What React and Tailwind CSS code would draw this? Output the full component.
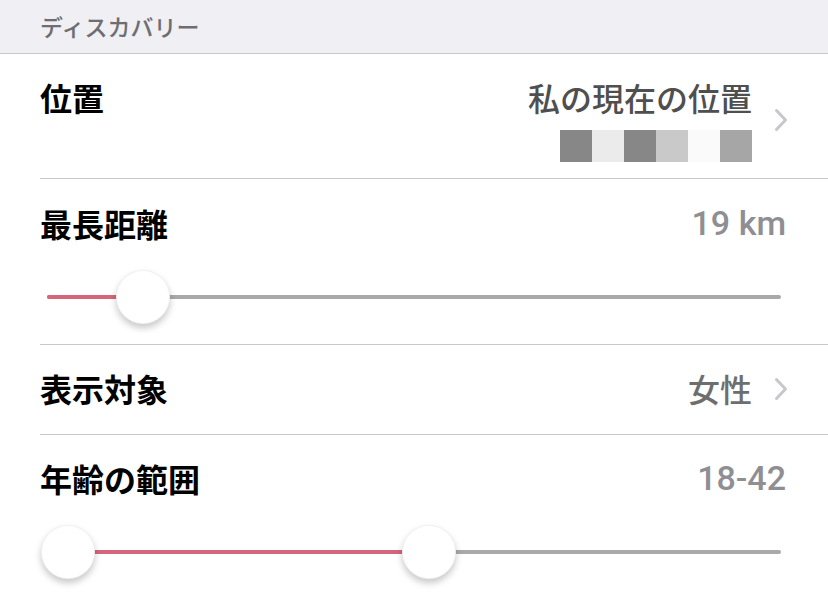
import React from "react";

const jp = { fontFamily: '"Noto Sans CJK JP", "Noto Sans", sans-serif' };
const num = { fontFamily: 'Roboto, "Liberation Sans", Arial, sans-serif' };

function Chevron() {
  return (
    <svg width="14" height="24" viewBox="0 0 14 24" className="shrink-0">
      <polyline points="2.5,2.5 11.5,12 2.5,21.5" fill="none" stroke="#c7c7cc" strokeWidth="3" strokeLinecap="round" strokeLinejoin="round" />
    </svg>
  );
}

function Thumb({ center }) {
  return (
    <div
      className="absolute top-0 w-[54px] h-[54px] rounded-full bg-white border border-black/5 shadow-[0_4px_7px_rgba(0,0,0,0.22)]"
      style={{ left: center - 27 }}
    />
  );
}

function Slider({ from, to, thumbs }) {
  return (
    <div className="relative h-[54px] mx-10">
      <div className="absolute left-[7px] right-[7px] top-[25px] h-[4px] rounded-full bg-[#a9a9ab]" />
      <div
        className="absolute top-[25px] h-[4px] rounded-full bg-[#d5657b]"
        style={{ left: from, width: to - from }}
      />
      {thumbs.map((c, i) => (
        <Thumb key={i} center={c} />
      ))}
    </div>
  );
}

export default function App() {
  const squares = ["#878787", "#ebebeb", "#878787", "#c9c9c9", "#fafafa", "#a6a6a6"];
  return (
    <div className="w-[828px] h-[601px] overflow-hidden bg-white" style={jp}>
      <div className="h-[54px] bg-[#efeff4] border-b border-[#c8c7cc] flex items-center pl-10">
        <span className="text-[23px] font-medium text-[#6d6d72] leading-none">ディスカバリー</span>
      </div>

      {/* 位置 */}
      <div className="ml-10 border-b border-[#c8c7cc] pt-[23px] pb-[16px] flex items-center pr-10">
        <div className="flex-1 self-start text-[32px] font-bold text-black leading-[41px]">位置</div>
        <div className="flex flex-col items-end">
          <div className="text-[32px] font-medium text-[#4f4f4f] leading-[41px]">私の現在の位置</div>
          <div className="flex mt-3">
            {squares.map((c, i) => (
              <div key={i} className="w-8 h-8" style={{ backgroundColor: c }} />
            ))}
          </div>
        </div>
        <div className="ml-[22px]">
          <Chevron />
        </div>
      </div>

      {/* 最長距離 */}
      <div className="border-b border-[#c8c7cc] ml-10">
        <div className="pt-[24px] flex items-center pr-[42px]">
          <div className="flex-1 text-[32px] font-bold text-black leading-[41px]">最長距離</div>
          <div className="text-[34px] font-medium text-[#8e8e93] leading-[41px]" style={num}>19 km</div>
        </div>
        <div className="-ml-10 mt-[26px] pb-[20px]">
          <Slider from={7} to={90} thumbs={[103]} />
        </div>
      </div>

      {/* 表示対象 */}
      <div className="ml-10 border-b border-[#c8c7cc] pt-[23px] pb-[25px] flex items-center pr-10">
        <div className="flex-1 text-[32px] font-bold text-black leading-[41px]">表示対象</div>
        <div className="text-[32px] font-medium text-[#6e6e6e] leading-[41px]">女性</div>
        <div className="ml-[22px]">
          <Chevron />
        </div>
      </div>

      {/* 年齢の範囲 */}
      <div className="ml-10">
        <div className="pt-[23px] flex items-center pr-[42px]">
          <div className="flex-1 text-[32px] font-bold text-black leading-[41px]">年齢の範囲</div>
          <div className="text-[34px] font-medium text-[#8e8e93] leading-[41px]" style={num}>18-42</div>
        </div>
        <div className="-ml-10 mt-[26px]">
          <Slider from={28} to={389} thumbs={[28, 389]} />
        </div>
      </div>
    </div>
  );
}
